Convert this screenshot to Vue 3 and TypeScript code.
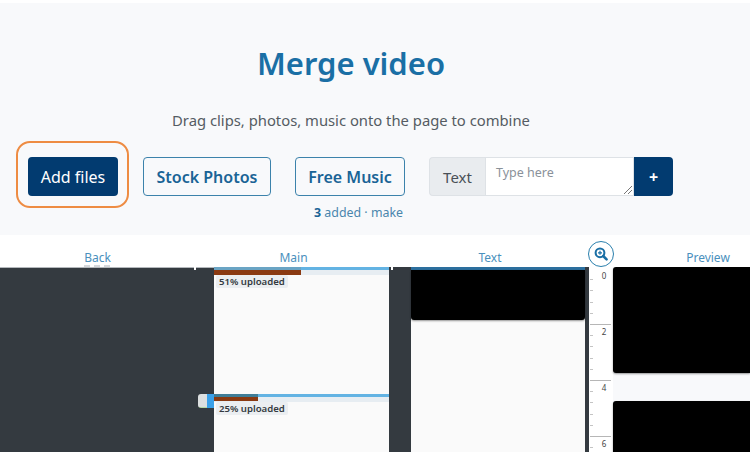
<script setup lang="ts">
const ticks = [0, 2, 4, 6]
const minor = [0, 1, 2, 3]
</script>

<template>
  <div class="page">
    <section class="hero">
      <h1 class="title">Merge video</h1>
      <p class="sub">Drag clips, photos, music onto the page to combine</p>
      <div class="tools">
        <div class="focus-ring"><button class="btn solid">Add files</button></div>
        <button class="btn outline stock">Stock Photos</button>
        <div class="music-col">
          <button class="btn outline music">Free Music</button>
        </div>
        <div class="input-group">
          <span class="addon">Text</span>
          <div class="area">
            <span class="ph">Type here</span>
            <svg class="grip" width="10" height="10" viewBox="0 0 10 10">
              <path d="M9 1 1 9M9 5 5 9" stroke="#777" stroke-width="1" fill="none" />
            </svg>
          </div>
          <button class="plus">+</button>
        </div>
      </div>
      <div class="count"><b>3</b> added · <span>make</span></div>
    </section>

    <nav class="heads">
      <span class="h back">Back</span>
      <span class="h main-h">Main</span>
      <span class="h text-h">Text</span>
      <span class="zoom">
        <svg width="16" height="16" viewBox="0 0 16 16">
          <circle cx="7" cy="6.8" r="4.4" fill="none" stroke="#1a6fa5" stroke-width="2" />
          <path d="M10.2 10 13.6 13.4" stroke="#1a6fa5" stroke-width="2.6" stroke-linecap="round" />
          <path d="M5 6.8h4M7 4.8v4" stroke="#1a6fa5" stroke-width="1.2" />
        </svg>
      </span>
      <span class="h prev-h">Preview</span>
    </nav>

    <section class="board">
      <i class="notch n1"></i>
      <i class="notch n2"></i>
      <div class="col-back"></div>
      <div class="col-main">
        <div class="clip first">
          <div class="bar"><i class="fill w51"></i></div>
          <span class="tag">51% uploaded</span>
        </div>
        <div class="clip second">
          <span class="handle"></span>
          <div class="bar"><i class="fill w25"></i></div>
          <span class="tag">25% uploaded</span>
        </div>
      </div>
      <div class="col-text">
        <div class="text-block"></div>
      </div>
      <div class="ruler">
        <div v-for="t in ticks" :key="t" class="tick-group">
          <div class="minors">
            <i v-for="m in minor" :key="m" class="minor"></i>
          </div>
          <span class="num">{{ t }}</span>
        </div>
      </div>
      <div class="col-preview">
        <div class="frame f1"></div>
        <div class="frame f2"></div>
      </div>
    </section>
  </div>
</template>

<style>
html, body { margin: 0; background: #fff; }
</style>

<style scoped>
.page {
  width: 750px;
  height: 452px;
  overflow: hidden;
  box-sizing: border-box;
  padding-top: 3px;
  font-family: "Noto Sans", "Open Sans", sans-serif;
  background: #fff;
}
.hero {
  height: 232px;
  background: #f8f9fb;
  box-sizing: border-box;
  padding-top: 38px;
}
.title {
  margin: 0;
  width: 702px;
  text-align: center;
  font-size: 31px;
  line-height: 44px;
  font-weight: 600;
  color: #1a6fa5;
}
.sub {
  margin: 24px 0 0;
  width: 702px;
  text-align: center;
  font-size: 14.8px;
  line-height: 22px;
  color: #555c63;
}
.tools {
  margin-top: 26px;
  display: flex;
  align-items: flex-start;
  padding-left: 16px;
}
.focus-ring {
  box-sizing: border-box;
  width: 113px;
  height: 67px;
  margin: -16px 0 -12px;
  padding: 14px 10px;
  border: 2px solid #ee8c43;
  border-radius: 14px;
}
.btn {
  box-sizing: border-box;
  height: 39px;
  border-radius: 4px;
  font-family: inherit;
  font-size: 16px;
  padding: 0;
}
.solid {
  width: 90px;
  background: #023b70;
  color: #fff;
  border: 0;
}
.outline {
  background: transparent;
  color: #1a6496;
  border: 1px solid #3c82ab;
  font-weight: 600;
}
.stock { width: 128px; margin-left: 14px; }
.music { width: 110px; }
.music-col { margin-left: 24px; }
.input-group {
  display: flex;
  height: 39px;
  width: 244px;
  margin-left: 24px;
}
.addon {
  box-sizing: border-box;
  width: 56px;
  background: #e9ecef;
  border: 1px solid #dee2e6;
  border-right: 0;
  border-radius: 4px 0 0 4px;
  color: #495057;
  font-size: 15px;
  line-height: 38px;
  text-align: center;
}
.area {
  box-sizing: border-box;
  flex: 1;
  background: #fff;
  border: 1px solid #dee2e6;
  position: relative;
  padding: 5px 10px;
  font-size: 12.5px;
  line-height: 20px;
  color: #8a9199;
}
.ph { display: block; }
.grip { position: absolute; right: 0; bottom: 0; }
.plus {
  width: 39px;
  border: 0;
  padding: 0;
  background: #023b70;
  color: #fff;
  border-radius: 0 4px 4px 0;
  font-family: inherit;
  font-weight: 700;
  font-size: 16px;
}
.count {
  margin-top: 8px;
  padding-left: 314px;
  font-size: 12.4px;
  line-height: 18px;
  color: #4a86ad;
}
.count b { color: #1a6496; }
.heads {
  position: relative;
  display: grid;
  grid-template-columns: 195px 197px 196px 1fr;
  height: 32px;
  box-sizing: border-box;
  background: #fff;
  font-size: 12px;
  color: #4a90bd;
}
.h { text-align: center; line-height: 18px; padding-top: 14px; }
.back {
  text-decoration: underline dashed #d5d8dc 2px;
  text-underline-offset: 3px;
}
.prev-h { padding-left: 78px; }
.zoom {
  position: absolute;
  left: 588px;
  top: 6px;
  width: 26px;
  height: 26px;
  box-sizing: border-box;
  border: 1px solid #2a7fad;
  border-radius: 50%;
  background: #fff;
  display: flex;
  align-items: center;
  justify-content: center;
}
.board {
  position: relative;
  display: flex;
  height: 185px;
  background: #343a40;
  overflow: hidden;
}
.notch {
  position: absolute;
  top: 0;
  width: 2px;
  height: 3px;
  background: #fff;
}
.n1 { left: 194px; }
.n2 { left: 391px; }
.col-back { width: 214px; border-top: 1px solid #b4b8bc; box-sizing: border-box; }
.col-main {
  width: 175px;
  background: #fafafa;
  position: relative;
}
.clip { position: relative; }
.first { height: 127px; }
.bar {
  height: 8px;
  background: #e7edf2;
  border-top: 3px solid #63b3e3;
  box-sizing: border-box;
  position: relative;
}
.fill {
  position: absolute;
  left: 0;
  top: 0;
  height: 4px;
  background: #8a3a12;
  display: block;
}
.fill::before {
  content: "";
  position: absolute;
  left: 0;
  right: 0;
  top: -3px;
  height: 3px;
}
.w51 { width: 87px; height: 5px; }
.w51::before { background: #6aa4c4; }
.w25 { width: 44px; }
.w25::before { background: #3f7d97; }
.tag {
  display: inline-block;
  margin: 0 0 0 2px;
  padding: 0 3px;
  background: #ebeef1;
  border-radius: 2px;
  font-size: 9.6px;
  line-height: 13px;
  font-weight: 600;
  color: #343a40;
  vertical-align: top;
}
.handle {
  position: absolute;
  left: -16px;
  top: 0;
  width: 16px;
  height: 14px;
  border-radius: 3px 0 0 3px;
  background:
    linear-gradient(90deg, transparent 56%, #3aa0e8 56%),
    linear-gradient(180deg, #dcdfe0 90%, #b5d8a5 90%);
}
.col-text {
  width: 174px;
  margin-left: 22px;
  background: #fafafa;
  border-top: 3px solid #2c6f9e;
  box-sizing: border-box;
}
.text-block {
  height: 50px;
  background: #000;
  border-radius: 0 0 3px 3px;
  box-shadow: 0 1px 2px rgba(0, 0, 0, 0.4);
}
.ruler {
  width: 24px;
  margin-left: 4px;
  background: #fff;
  padding-top: 1px;
  box-sizing: border-box;
}
.tick-group {
  height: 56px;
  border-top: 1px solid #b6b6b6;
  margin: 0 2px 0 1px;
  box-sizing: border-box;
  display: flex;
}
.tick-group:first-child { border-top-color: #fff; }
.minors {
  width: 7px;
  padding-top: 10px;
  display: flex;
  flex-direction: column;
  gap: 10.3px;
}
.num {
  flex: 1;
  text-align: center;
  font-size: 8px;
  line-height: 13px;
  color: #444;
}
.minor {
  display: block;
  width: 3px;
  height: 1px;
  background: #c4c4c4;
}
.col-preview {
  flex: 1;
  background: #f8f9fb;
}
.frame {
  background: #000;
  border-radius: 3px 0 0 3px;
  box-shadow: 0 1px 2px rgba(0, 0, 0, 0.4);
}
.f1 { height: 106px; }
.f2 { height: 60px; margin-top: 28px; }
</style>
